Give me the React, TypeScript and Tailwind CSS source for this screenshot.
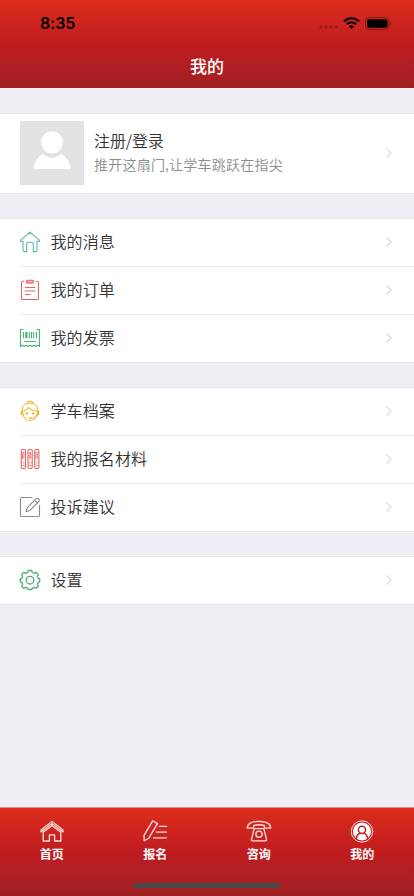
import type { ReactNode } from "react";

type MenuItem = {
  label: string;
  icon: ReactNode;
};

function Icon({ color, children }: { color: string; children: ReactNode }) {
  return (
    <svg
      width="22"
      height="22"
      viewBox="0 0 22 22"
      fill="none"
      stroke={color}
      strokeWidth="1.1"
      strokeLinecap="round"
      strokeLinejoin="round"
      className="shrink-0"
    >
      {children}
    </svg>
  );
}

function TabIcon({ children }: { children: ReactNode }) {
  return (
    <svg
      width="26"
      height="24"
      viewBox="0 0 26 24"
      fill="none"
      stroke="#fbe3e1"
      strokeWidth="1.3"
      strokeLinecap="round"
      strokeLinejoin="round"
    >
      {children}
    </svg>
  );
}

const messageItems: MenuItem[] = [
  {
    label: "我的消息",
    icon: (
      <Icon color="#5fb9a8">
        <path d="M11 1.3 1.5 9.1c-.5.5-.2 1.3.5 1.3h2v8.8c0 .9.5 1.4 1.3 1.4h2.4v-8c0-.8.5-1.3 1.3-1.3h4c.8 0 1.3.5 1.3 1.3v8h2.4c.8 0 1.3-.5 1.3-1.4v-8.8h2c.7 0 1-.8.5-1.3Z" />
      </Icon>
    ),
  },
  {
    label: "我的订单",
    icon: (
      <Icon color="#e56565">
        <path d="M5 2.2H3.8c-.8 0-1.3.5-1.3 1.3v15.7c0 .8.5 1.3 1.3 1.3h14.4c.8 0 1.3-.5 1.3-1.3V3.5c0-.8-.5-1.3-1.3-1.3H17" />
        <rect x="7.5" y="1.3" width="7" height="2.8" rx="1" fill="#f6b3b3" />
        <path d="M6.2 8.5h9.8M6.2 12h9.8M6.2 15.5h4.5" />
      </Icon>
    ),
  },
  {
    label: "我的发票",
    icon: (
      <Icon color="#48b274">
        <path d="M4 2.5H1.5v17l1.9-1.3 1.9 1.3 1.9-1.3 1.9 1.3 1.9-1.3 1.9 1.3 1.9-1.3 1.9 1.3 1.9-1.3 1.9 1.3v-17H18" />
        <path d="M4.5 5v6.3M10.3 5v6.3M12.5 5v6.3M14.7 5v6.3M17.5 5v6.3" strokeLinecap="butt" />
        <path d="M7.4 5v6.3" strokeWidth="2.2" strokeLinecap="butt" />
        <path d="M5.5 14.5h11" />
      </Icon>
    ),
  },
];

const recordItems: MenuItem[] = [
  {
    label: "学车档案",
    icon: (
      <Icon color="#edb72f">
        <path d="M3.2 10C3.2 5.6 6.4 3 11 3s7.8 2.6 7.8 7M8.2 3.2c.2-1.5 1.2-2.2 2.8-2.2s2.6.7 2.8 2.2" />
        <path d="M3.4 10.8c0 5.5 3 9.7 7.6 9.7s7.6-4.2 7.6-9.7M3.8 11c2.8-.2 4.7-1.4 5.7-3.4 2.2 2.1 4.9 3.2 8.7 3.4" />
        <path d="M2.6 11.3v3M19.4 11.3v3" strokeWidth="1.8" />
        <path d="M19 15c-1 1.8-3.1 3-6.1 3.2" strokeWidth=".8" />
        <circle cx="7.8" cy="13.4" r=".7" fill="#edb72f" />
        <circle cx="14.2" cy="13.4" r=".7" fill="#edb72f" />
        <path d="M10.5 18h2" strokeWidth="1.5" />
      </Icon>
    ),
  },
  {
    label: "我的报名材料",
    icon: (
      <Icon color="#e56565">
        {[2.3, 9, 15.7].map((x) => (
          <g key={x}>
            <rect x={x} y="1.5" width="4.2" height="19" rx="1.2" />
            <path d={`M${x + 1.6} 4.5h1v5.8h-1zM${x + 1.4} 14.8h1.4M${x + 1.4} 17.5h1.4`} strokeWidth=".8" />
          </g>
        ))}
      </Icon>
    ),
  },
  {
    label: "投诉建议",
    icon: (
      <Icon color="#8c8c8c">
        <path d="M13 1.5H2.8c-.8 0-1.3.5-1.3 1.3v16.4c0 .8.5 1.3 1.3 1.3h16.4c.8 0 1.3-.5 1.3-1.3V9.5" />
        <path d="M7 15.7 8.3 11.6 17 2.9c.9-.9 2-.9 2.8-.1s.8 2-.1 2.8l-8.7 8.8L7 15.7ZM15.5 4.4l2.8 2.8" />
      </Icon>
    ),
  },
];

const settingItems: MenuItem[] = [
  {
    label: "设置",
    icon: (
      <Icon color="#4db074">
        <path
          d="M9.3 1.5h3.4l.6 2 2 .8 1.9-1 2.2 2.3-1 1.9.8 1.9 1.5.5v2.9l-1.5.5-.8 2 1 1.9-2.3 2.2-1.8-1-2 .8-.6 1.3H9.3l-.6-1.3-2-.8-1.9 1-2.2-2.2 1-1.9-.8-2-1.5-.5V9.9l1.5-.5.8-1.9-1-1.9 2.2-2.3 1.9 1 2-.8Z"
          strokeWidth="1.3"
        />
        <circle cx="11" cy="11.2" r="3.8" strokeWidth="1.3" />
      </Icon>
    ),
  },
];

const tabs: MenuItem[] = [
  {
    label: "首页",
    icon: (
      <TabIcon>
        <path d="M2 12 13 3.4 24 12M2 10 13 1.4 24 10M2 12v-2M24 12v-2" strokeWidth="1.1" />
        <path d="M4.2 12.3V21h6.2v-6.2h5.2V21h6.2v-8.7L13 5.5 4.2 12.3Z" />
      </TabIcon>
    ),
  },
  {
    label: "报名",
    icon: (
      <TabIcon>
        <path d="M10.7.8 15.5 3.6 6.8 18.2 2.2 20.8l-.2-5.5L10.7.8Z" />
        <path d="M17.5 6.3h7M14.5 12.1h10M11.5 17.8h13" />
      </TabIcon>
    ),
  },
  {
    label: "咨询",
    icon: (
      <TabIcon>
        <path d="M1.4 8.2C1 4 5.5 1.3 13 1.3s12 2.7 11.6 6.9h-5.4c-.9 0-1-1.2-1.1-2.8-3.1-.8-7.1-.8-10.2 0C7.8 7 7.7 8.2 6.8 8.2H1.4Z" />
        <path d="M8.2 8.7h9.6l2.7 10.7c.2.8-.2 1.4-1 1.4h-13c-.8 0-1.2-.6-1-1.4L8.2 8.7Z" />
        <circle cx="13" cy="14.2" r="3.1" />
      </TabIcon>
    ),
  },
  {
    label: "我的",
    icon: (
      <TabIcon>
        <circle cx="13" cy="11.5" r="10.7" strokeWidth="1" />
        <circle cx="13" cy="11.5" r="9" fill="#fff" stroke="none" />
        <circle cx="13" cy="9.8" r="3.6" stroke="#bd2420" strokeWidth="1.5" />
        <path d="M7.3 18.4c.3-2.6 1.6-4.4 3.6-5.3M18.7 18.4c-.3-2.6-1.6-4.4-3.6-5.3" stroke="#bd2420" strokeWidth="1.5" />
      </TabIcon>
    ),
  },
];

function Chevron() {
  return (
    <svg width="8" height="12" viewBox="0 0 8 12" fill="none" stroke="#e2e2e4" strokeWidth="1.7">
      <path d="m1.5 1.5 4.5 4.5-4.5 4.5" />
    </svg>
  );
}

function MenuGroup({ items }: { items: MenuItem[] }) {
  return (
    <ul className="border-y border-[#e6e6e9] bg-white pl-5">
      {items.map((item, i) => (
        <li
          key={item.label}
          className={`flex items-center pr-[21px] pb-px ${i > 0 ? "h-12 border-t border-[#ebebed]" : "h-[47px]"}`}
        >
          <div className="-ml-px flex w-[31.5px] shrink-0">{item.icon}</div>
          <span className="flex-1 pb-0.5 text-base leading-6 tracking-[0.1px]">{item.label}</span>
          <Chevron />
        </li>
      ))}
    </ul>
  );
}

function StatusBar() {
  return (
    <div className="flex h-11 items-center justify-between pt-0.5 pr-[22px] pl-10 text-black">
      <span className="font-[Inter] text-[16px] font-semibold tracking-[-0.1px]">8:35</span>
      <div className="flex items-center">
        <svg width="20" height="6" viewBox="0 0 20 6" fill="#a31b16" className="mt-2">
          <circle cx="2" cy="3" r="1.8" />
          <circle cx="7" cy="3" r="1.8" />
          <circle cx="12" cy="3" r="1.8" />
          <circle cx="17" cy="3" r="1.8" />
        </svg>
        <svg width="17" height="12" viewBox="0 0 17 12" className="ml-1" fill="none" stroke="#000" strokeWidth="2.1">
          <path d="M1 4.4c4.4-4.2 10.6-4.2 15 0M3.8 7.3c2.8-2.6 6.6-2.6 9.4 0" />
          <path d="M5.8 9.3c1.6-1.5 3.8-1.5 5.4 0L8.5 12Z" fill="#000" stroke="none" />
        </svg>
        <svg width="27" height="13" viewBox="0 0 27 13" className="ml-[5px]">
          <rect x=".5" y=".5" width="23.5" height="12" rx="3.5" fill="none" stroke="#851713" />
          <rect x="2" y="2.2" width="20.5" height="8.6" rx="2" />
          <path d="M25.2 4.2c1.6.8 1.6 3.8 0 4.6Z" fill="#851713" />
        </svg>
      </div>
    </div>
  );
}

export default function App() {
  return (
    <div className="flex h-[896px] w-[414px] flex-col bg-[#efeef4] font-['Noto_Sans_CJK_SC',sans-serif] font-[350] text-[#333]">
      <header className="h-[88px] bg-linear-to-b from-[#dd2d1b] via-[#c01c20] to-[#9f2024]">
        <StatusBar />
        <h1 className="flex h-11 items-center justify-center text-[17px] font-medium text-white">我的</h1>
      </header>

      <main className="flex flex-1 flex-col gap-6 pt-[25px]">
        <section className="flex h-[81px] items-center border-y border-[#e6e6e9] bg-white pr-[21px] pb-px pl-5">
          <svg width="64" height="64" viewBox="0 0 64 64" fill="#fff" className="bg-[#e2e2e2]">
            <circle cx="32" cy="21.5" r="11" />
            <path d="M13.3 48c1-6.9 4.3-12 9.8-15.3 5.2 5.5 12.6 5.5 17.8 0C46.4 36 49.9 41.1 51 48Z" />
          </svg>
          <div className="ml-2.5 flex-1 pb-[3px]">
            <div className="text-base leading-6 tracking-[-0.1px]">注册/登录</div>
            <div className="text-sm leading-6 tracking-[0.22px] text-[#8c8c8c]">推开这扇门,让学车跳跃在指尖</div>
          </div>
          <Chevron />
        </section>
        <MenuGroup items={messageItems} />
        <MenuGroup items={recordItems} />
        <MenuGroup items={settingItems} />
      </main>

      <nav className="relative grid h-[89px] grid-cols-4 border-t border-[#d98d91] bg-linear-to-b from-[#dd2d1b] via-[#c01c20] to-[#9f2024] pt-3 text-white">
        {tabs.map((tab) => (
          <a key={tab.label} className="flex flex-col items-center">
            {tab.icon}
            <span className="text-xs leading-5 font-bold">{tab.label}</span>
          </a>
        ))}
        {/* home indicator */}
        <div className="absolute bottom-2 left-[133px] h-[5px] w-[147px] rounded-full bg-[#4a4a4c]" />
      </nav>
    </div>
  );
}
